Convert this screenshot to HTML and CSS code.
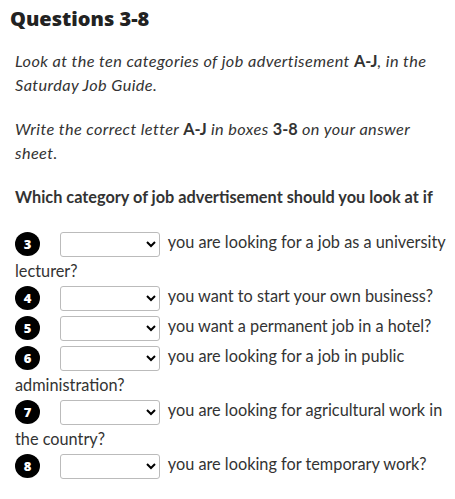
FILE: index.html
```html
<!DOCTYPE html>
<html>
<head>
<meta charset="utf-8">
<link rel="stylesheet" href="styles.css">
</head>
<body>
<div class="page">
  <h2 class="title">Questions 3-8</h2>
  <p class="instr">Look at the ten categories of job advertisement <b>A-J</b>, in the Saturday Job Guide.</p>
  <p class="instr">Write the correct letter <b>A-J</b> in boxes <b>3-8</b> on your answer sheet.</p>
  <p class="lead">Which category of job advertisement should you look at if</p>
  <div class="questions">
    <div class="q"><span class="num">3</span><select class="ans"><option></option></select> you are looking for a job as a university lecturer?</div>
    <div class="q"><span class="num">4</span><select class="ans"><option></option></select> you want to start your own business?</div>
    <div class="q"><span class="num">5</span><select class="ans"><option></option></select> you want a permanent job in a hotel?</div>
    <div class="q"><span class="num">6</span><select class="ans"><option></option></select> you are looking for a job in public administration?</div>
    <div class="q"><span class="num">7</span><select class="ans"><option></option></select> you are looking for agricultural work in the country?</div>
    <div class="q"><span class="num">8</span><select class="ans"><option></option></select> you are looking for temporary work?</div>
  </div>
</div>
</body>
</html>
```
FILE: styles.css
```css
html, body {
  margin: 0;
  padding: 0;
  background: #fff;
}
body {
  font-family: Lato, "Noto Sans", sans-serif;
  color: #333;
  font-size: 16.3px;
  line-height: 24px;
}
.page {
  padding: 6px 7px 0 15px;
}
.title {
  font-family: "Open Sans", sans-serif;
  font-weight: 800;
  font-size: 20px;
  line-height: 26px;
  margin: 0 0 17px -5px;
  color: #222;
}
.instr {
  font-style: italic;
  letter-spacing: 0.4px;
  margin: 0 0 20px 0;
}
.instr b {
  font-style: normal;
  font-weight: 700;
  letter-spacing: 0;
}
.lead {
  font-weight: 700;
  margin: 0 0 20px 0;
}
.q {
  line-height: 24px;
}
.num {
  display: inline-block;
  width: 25px;
  height: 24px;
  line-height: 24px;
  border-radius: 50%;
  background: #000;
  color: #fff;
  text-align: center;
  font-family: "Open Sans", sans-serif;
  font-weight: 800;
  font-size: 13px;
  vertical-align: middle;
  margin: 3px 20px 3px 0;
}
.ans {
  width: 100px;
  height: 25px;
  vertical-align: middle;
  border: 1px solid #bbb;
  border-radius: 3px;
  background: #fff;
  margin: 0 4px 0 0;
}
```
